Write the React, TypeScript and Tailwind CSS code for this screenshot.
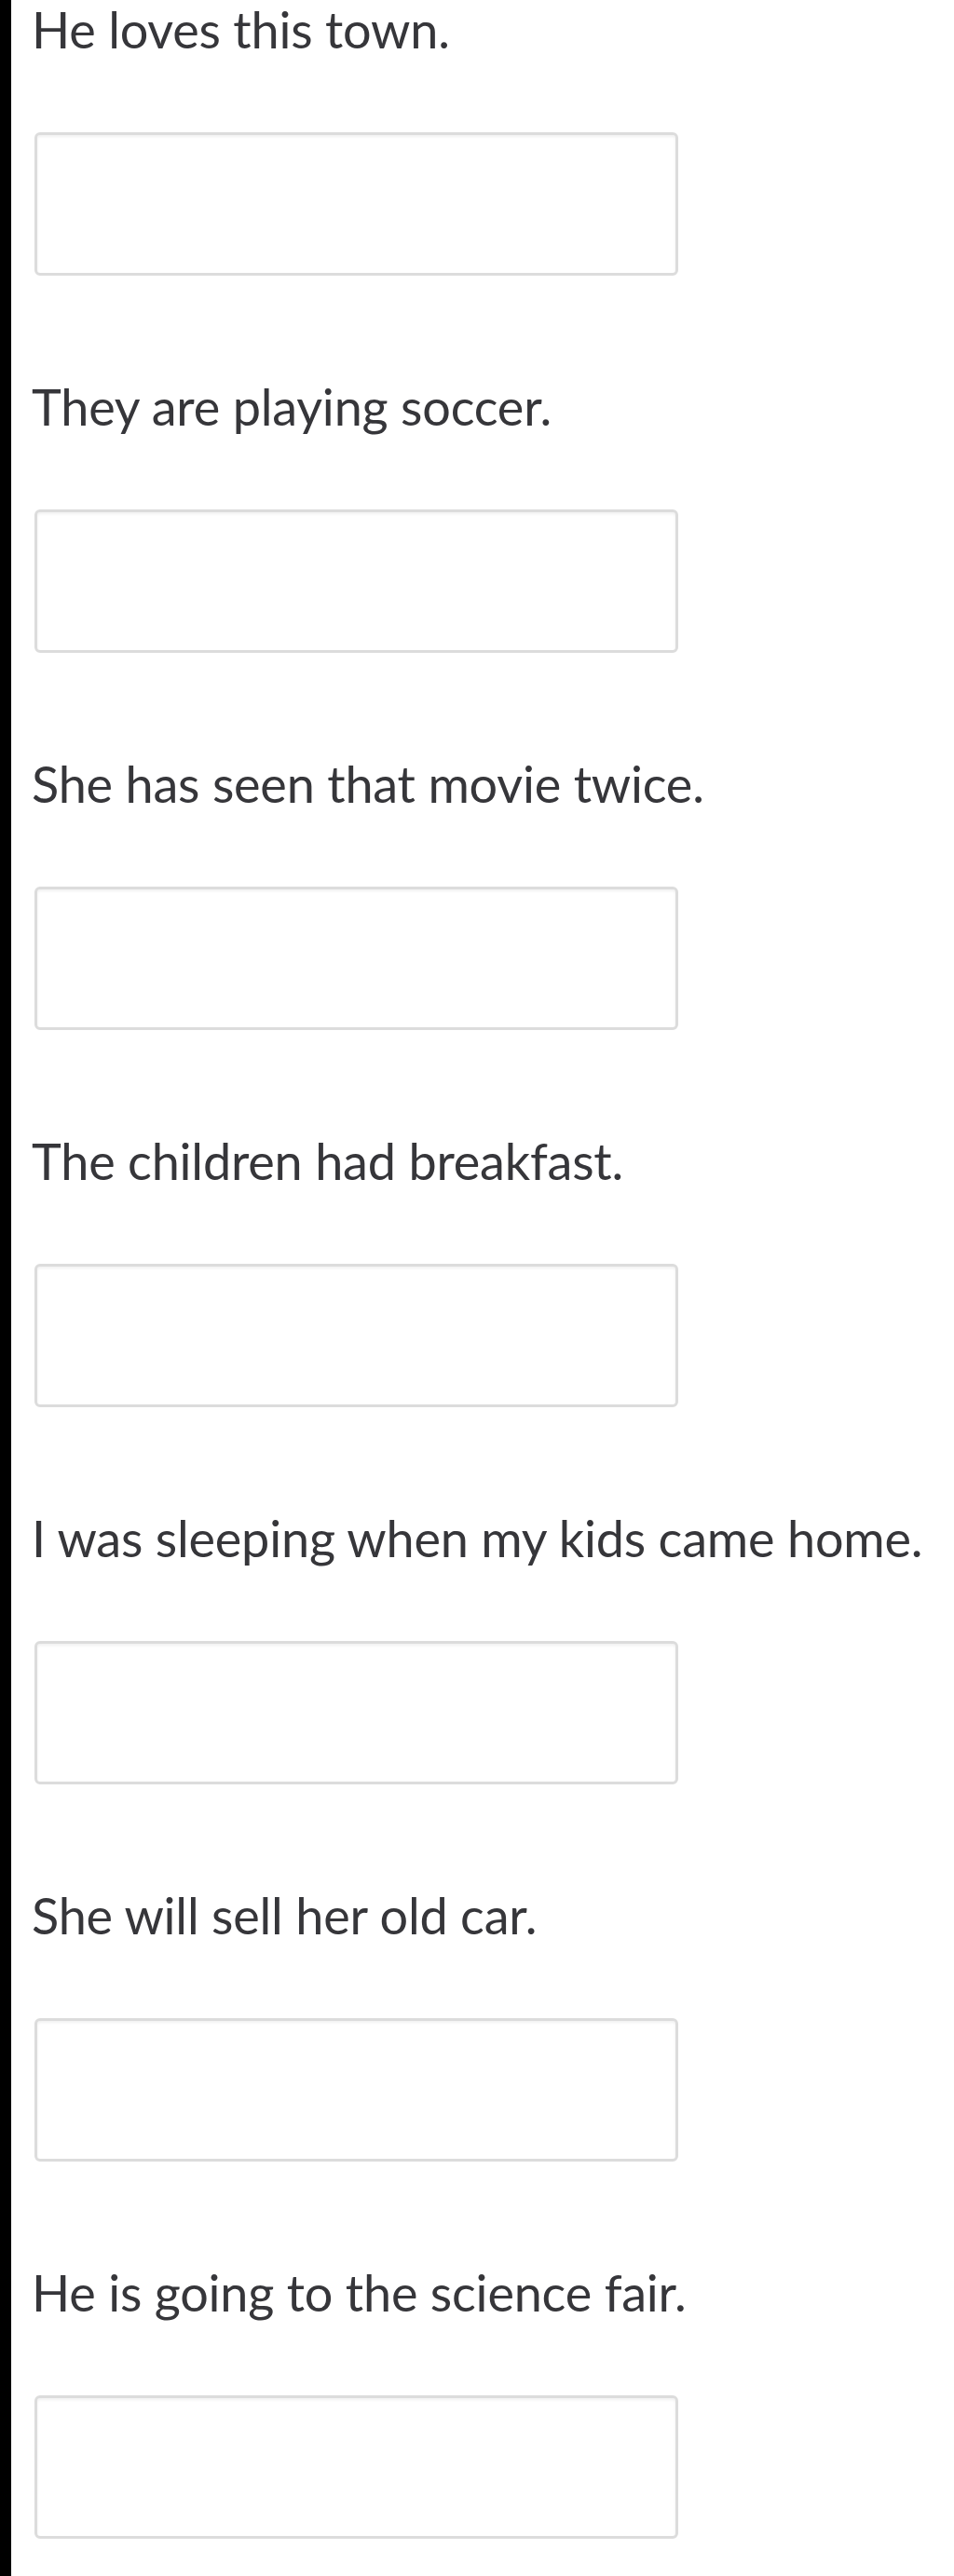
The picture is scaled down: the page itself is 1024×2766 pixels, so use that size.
const sentences = [
  'He loves this town.',
  'They are playing soccer.',
  'She has seen that movie twice.',
  'The children had breakfast.',
  'I was sleeping when my kids came home.',
  'She will sell her old car.',
  'He is going to the science fair.',
]

export default function App() {
  return (
    <div className="flex min-h-[2766px] bg-white" style={{ fontFamily: 'Lato, "Open Sans", sans-serif' }}>
      {/* left edge bar */}
      <div className="w-[12px] shrink-0 bg-black" />

      <div className="flex flex-col pl-[25px]">
        {sentences.map((s) => (
          <div key={s} className="flex h-[405px] shrink-0 flex-col">
            <p className="-ml-[3px] -mt-[1px] whitespace-nowrap text-[54px] leading-[65px] tracking-[-0.2px] text-[#36363a]">
              {s}
            </p>
            <input
              type="text"
              className="mt-[78px] h-[154px] w-[691px] rounded-[6px] border-[3px] border-[#dcdcdc] bg-white shadow-[inset_0_2px_3px_rgba(0,0,0,0.06)] outline-none"
            />
          </div>
        ))}
      </div>
    </div>
  )
}
